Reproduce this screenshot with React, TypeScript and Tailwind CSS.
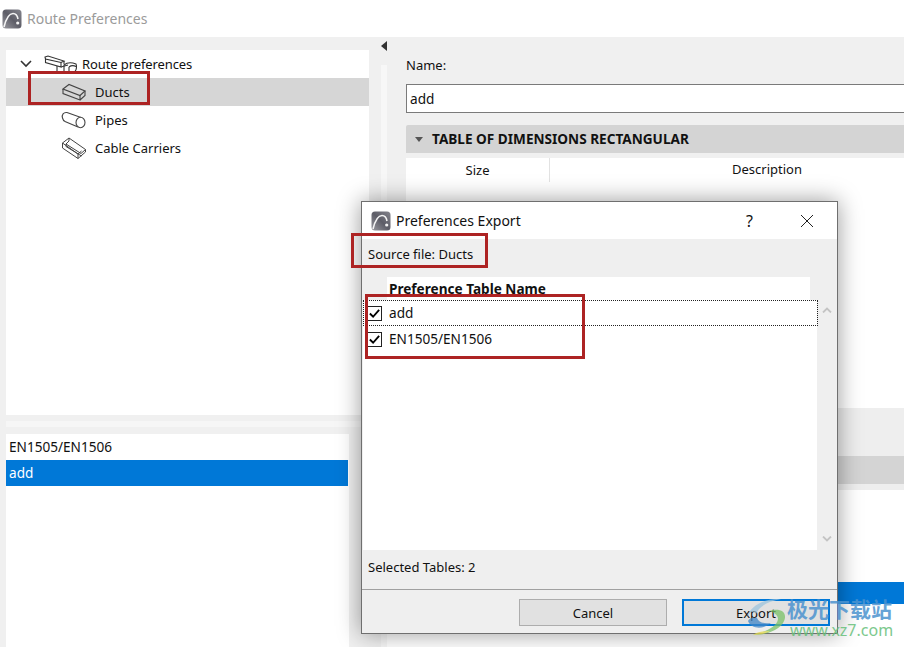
const LogoIcon = ({ id, className }: { id: string; className?: string }) => (
  <svg viewBox="0 0 20 20" className={className}>
    <defs>
      <linearGradient id={id} x1="0" y1="1" x2="1" y2="0">
        <stop offset="0" stopColor="#9a9aa0" />
        <stop offset="0.5" stopColor="#5d5d67" />
        <stop offset="1" stopColor="#85858d" />
      </linearGradient>
    </defs>
    <rect x="0.5" y="0.5" width="19" height="19" rx="3.5" fill={`url(#${id})`} />
    <path d="M2 18C4 10 7 4.5 11 4.5C14 4.5 15.5 7 16 10" fill="none" stroke="#f4f4f4" strokeWidth="1.6" />
    <circle cx="15.7" cy="14" r="1.6" fill="#f4f4f4" />
  </svg>
);

const RootIcon = () => (
  <svg viewBox="0 0 34 19" className="h-[19px] w-[34px]" fill="none" stroke="#333" strokeWidth="1.1">
    <path d="M1 2L4 1L20 6L17 7.5L1.5 4Z" fill="#fff" />
    <path d="M1.5 4L1.5 7.5L17 12L17 7.5M20 6L20 9" />
    <path d="M13 11L13 18M20 17L20 10C23 7.5 28 7.5 32 9C33 11 32.5 15 31 16.5M25 12C27 10.5 30 10.5 32 11.5M25 12L25 17" />
    <path d="M17 12L24 10" />
  </svg>
);

const DuctIcon = () => (
  <svg viewBox="0 0 26 18" className="h-[18px] w-[26px]" fill="none" stroke="#444" strokeWidth="1.1">
    <path d="M2 6L8 1.5L24 8L19 12.5Z" />
    <path d="M2 6L2 10.5L19 17L19 12.5M19 17L24 12.5L24 8" />
  </svg>
);

const PipeIcon = () => (
  <svg viewBox="0 0 26 18" className="h-[18px] w-[26px]" fill="none" stroke="#444" strokeWidth="1.1">
    <path d="M6 1.5L20 6.5M4 10.5L17 16" />
    <path d="M6 1.5C2.5 1 0.5 4 1.5 7C2 9 3 10 4 10.5" />
    <ellipse cx="19.5" cy="11.5" rx="4.5" ry="5.2" fill="#fff" />
  </svg>
);

const CableIcon = () => (
  <svg viewBox="0 0 26 22" className="h-[22px] w-[26px]" fill="none" stroke="#444" strokeWidth="1">
    <path d="M1.5 6L1.5 11L17 21.5L24.5 15L24.5 12.5" />
    <path d="M1.5 6L8 1L8 4L5 7L5 9.5L20.5 19" />
    <path d="M8 1L24.5 12.5L20 16.5L5 7" />
    <path d="M1.5 6L17 17L17 21.5M17 17L20.5 14" />
  </svg>
);

const TreeRow = ({ label, icon, selected }: { label: string; icon: React.ReactNode; selected?: boolean }) => (
  <div className={`flex h-[28px] items-center pl-[55px] ${selected ? 'bg-[#d6d6d6]' : ''}`}>
    <div className="flex w-[26px] justify-center">{icon}</div>
    <span className="ml-[8px] pt-[2px]">{label}</span>
  </div>
);

const Check = () => (
  <div className="flex h-[15px] w-[15px] items-center justify-center border border-[#222] bg-white">
    <svg viewBox="0 0 14 14" className="h-[13px] w-[13px]" fill="none" stroke="#000" strokeWidth="2">
      <path d="M2 7L5.5 10.5L12 3" />
    </svg>
  </div>
);

const Chevron = ({ up }: { up?: boolean }) => (
  <svg viewBox="0 0 10 6" className="h-[6px] w-[10px]" fill="none" stroke="#c4c4c4" strokeWidth="1.8">
    <path d={up ? 'M1 5.5L5 1.5L9 5.5' : 'M1 0.5L5 4.5L9 0.5'} />
  </svg>
);

const RedBox = ({ className }: { className: string }) => (
  <div className={`pointer-events-none absolute border-[3px] border-[#ad2323] ${className}`} />
);

export default function App() {
  const rows = ['add', 'EN1505/EN1506'];

  return (
    <div className="relative flex h-[647px] w-[904px] flex-col overflow-hidden bg-white font-['Noto_Sans',sans-serif] text-[13px] text-[#111]">
      {/* window title */}
      <div className="flex h-[37px] shrink-0 items-center pl-[2px]">
        <LogoIcon id="logo-main" className="h-[20px] w-[20px]" />
        <span className="ml-[5px] text-[14px] text-[#9b9b9b]">Route Preferences</span>
      </div>

      <div className="flex min-h-0 flex-1 bg-[#f0f0f0]">
        {/* left column */}
        <div className="flex w-[381px] shrink-0 flex-col pt-[13px]">
          <div className="ml-[6px] h-[365px] w-[363px] bg-white">
            <div className="flex h-[28px] items-center pl-[19px]">
              <svg viewBox="0 0 14 10" className="h-[10px] w-[14px] -translate-x-[6px]" fill="none" stroke="#333" strokeWidth="1.6">
                <path d="M2 2L7 7L12 2" />
              </svg>
              <div className="ml-[5px]"><RootIcon /></div>
              <span className="ml-[4px] pt-[2px] tracking-[-0.1px]">Route preferences</span>
            </div>
            <TreeRow label="Ducts" icon={<DuctIcon />} selected />
            <TreeRow label="Pipes" icon={<PipeIcon />} />
            <TreeRow label="Cable Carriers" icon={<CableIcon />} />
          </div>
          <div className="ml-[6px] mt-[6px] h-[6px] bg-[#f6f6f6]" />
          <div className="ml-[6px] mt-[7px] min-h-0 w-[343px] flex-1 bg-white">
            <div className="flex h-[26px] items-center pl-[3px] text-[13.6px]">EN1505/EN1506</div>
            <div className="flex h-[26px] w-[342px] items-center bg-[#0078d7] pl-[3px] text-[13.6px] text-white">add</div>
          </div>
        </div>

        {/* splitter */}
        <div className="flex w-[6px] shrink-0 flex-col">
          <div className="flex h-[28px] bg-[#f0f0f0]">
            <div className="mt-[4px] h-0 w-0 border-y-[5px] border-r-[6px] border-y-transparent border-r-[#333]" />
          </div>
          <div className="flex-1 bg-[#f7f7f7]" />
        </div>

        {/* right panel */}
        <div className="-mr-[20px] flex min-w-0 flex-1 flex-col pl-[19px] pt-[19px]">
          <div className="h-[18px] leading-[18px]">Name:</div>
          <div className="mt-[10px] flex h-[29px] items-center border border-[#7a7a7a] bg-white pl-[3px] pt-[2px] text-[13.6px]">add</div>
          <div className="mt-[12px] flex h-[28px] items-center rounded-t-[2px] bg-[#d4d4d4] pl-[9px]">
            <div className="h-0 w-0 border-x-[4px] border-t-[5px] border-x-transparent border-t-[#555]" />
            <span className="ml-[9px] pt-[1px] text-[13.6px] font-bold">TABLE OF DIMENSIONS RECTANGULAR</span>
          </div>
          <div className="mt-[5px] flex h-[250px] flex-col bg-white">
            <div className="flex h-[23px] items-center">
              <div className="w-[144px] shrink-0 border-r border-[#e2e2e2] pt-[1px] text-center leading-[23px]">Size</div>
              <div className="w-[434px] shrink-0 pt-[1px] text-center">Description</div>
            </div>
          </div>
          <div className="-ml-[19px] flex flex-1 flex-col">
            <div className="h-[48px] bg-[#eeeeee]" />
            <div className="h-[28px] bg-[#d4d4d4]" />
            <div className="h-[6px] bg-[#eeeeee]" />
            <div className="h-[92px] bg-white" />
            <div className="h-[22px] bg-[#0078d7]" />
            <div className="flex-1 bg-white" />
          </div>
        </div>
      </div>

      {/* export dialog */}
      <div className="absolute left-[361px] top-[201px] flex h-[433px] w-[477px] flex-col border border-[#6f6f6f] bg-[#efefef] shadow-[0_0_22px_rgba(0,0,0,0.4)]">
        <div className="flex h-[37px] shrink-0 items-center bg-white pl-[9px]">
          <LogoIcon id="logo-dialog" className="h-[20px] w-[20px]" />
          <span className="ml-[5px] text-[14px]">Preferences Export</span>
          <span className="ml-auto mr-[47px] text-[16px]">?</span>
          <svg viewBox="0 0 14 14" className="mr-[23px] h-[14px] w-[14px]" fill="none" stroke="#222" strokeWidth="1">
            <path d="M1 1L13 13M13 1L1 13" />
          </svg>
        </div>
        <div className="flex h-[30px] shrink-0 items-center pl-[6px] pt-[2px]">Source file: Ducts</div>
        <div className="mt-[8px] flex min-h-0 flex-1">
          <div className="flex min-w-0 flex-1 flex-col">
            <div className="ml-[25px] mr-[7px] flex h-[23px] items-center bg-white pl-[2px] pt-[2px] text-[13.6px] font-bold">Preference Table Name</div>
            <div className="ml-[1px] flex-1 bg-white">
              {rows.map((name, i) => (
                <div
                  key={name}
                  className={`flex h-[26px] items-center text-[13.6px] ${i === 0 ? '-mr-[1px] border border-dotted border-[#222] pl-[3px]' : 'pl-[4px]'}`}
                >
                  <Check />
                  <span className="ml-[7px]">{name}</span>
                </div>
              ))}
            </div>
          </div>
          <div className="flex w-[20px] shrink-0 flex-col items-center justify-between pb-[8px] pt-[30px]">
            <Chevron up />
            <Chevron />
          </div>
        </div>
        <div className="flex h-[40px] shrink-0 items-center border-b border-[#a0a0a0] pb-[3px] pl-[6px]">Selected Tables: 2</div>
        <div className="flex h-[43px] shrink-0 items-start justify-end gap-[15px] pr-[7px] pt-[9px]">
          <button type="button" className="h-[27px] w-[148px] border border-[#adadad] bg-[#e1e1e1] pt-[2px]">Cancel</button>
          <button type="button" className="h-[27px] w-[148px] border-2 border-[#0078d7] bg-[#e1e1e1] pt-[2px]">Export</button>
        </div>
      </div>

      {/* annotations */}
      <RedBox className="left-[28px] top-[71px] h-[34px] w-[122px]" />
      <RedBox className="left-[351px] top-[233px] h-[35px] w-[137px]" />
      <RedBox className="left-[365px] top-[294px] h-[65px] w-[220px]" />

      {/* watermark */}
      <svg viewBox="0 0 46 40" className="absolute left-[745px] top-[597px] h-[40px] w-[46px] opacity-75">
        <path d="M2 20C6 8 20 1 36 2C24 4 14 9 11 17C9 12 5 15 2 20Z" fill="#9cc4de" />
        <path d="M24 14C36 10 44 16 38 26C33 34 20 38 8 38C20 35 32 30 33 22C33 18 29 15 24 14Z" fill="#79c267" />
        <path d="M3 24C6 32 18 33 26 26C20 27 14 26 12 21C8 20 4 21 3 24Z" fill="#3f86c7" />
        <path d="M8 38C14 38 20 37 25 34C18 34 12 35 8 38Z" fill="#e4d84c" />
      </svg>
      <div className="absolute left-[787px] top-[596px] whitespace-nowrap font-['Noto_Sans_CJK_SC',sans-serif] text-[21px] font-bold leading-[24px] text-[#4c93cf] opacity-85">极光下载站</div>
      <div className="absolute left-[790px] top-[621px] whitespace-nowrap text-[16px] leading-[18px] text-[#67c07a] opacity-85">www.xz7.com</div>
    </div>
  );
}
